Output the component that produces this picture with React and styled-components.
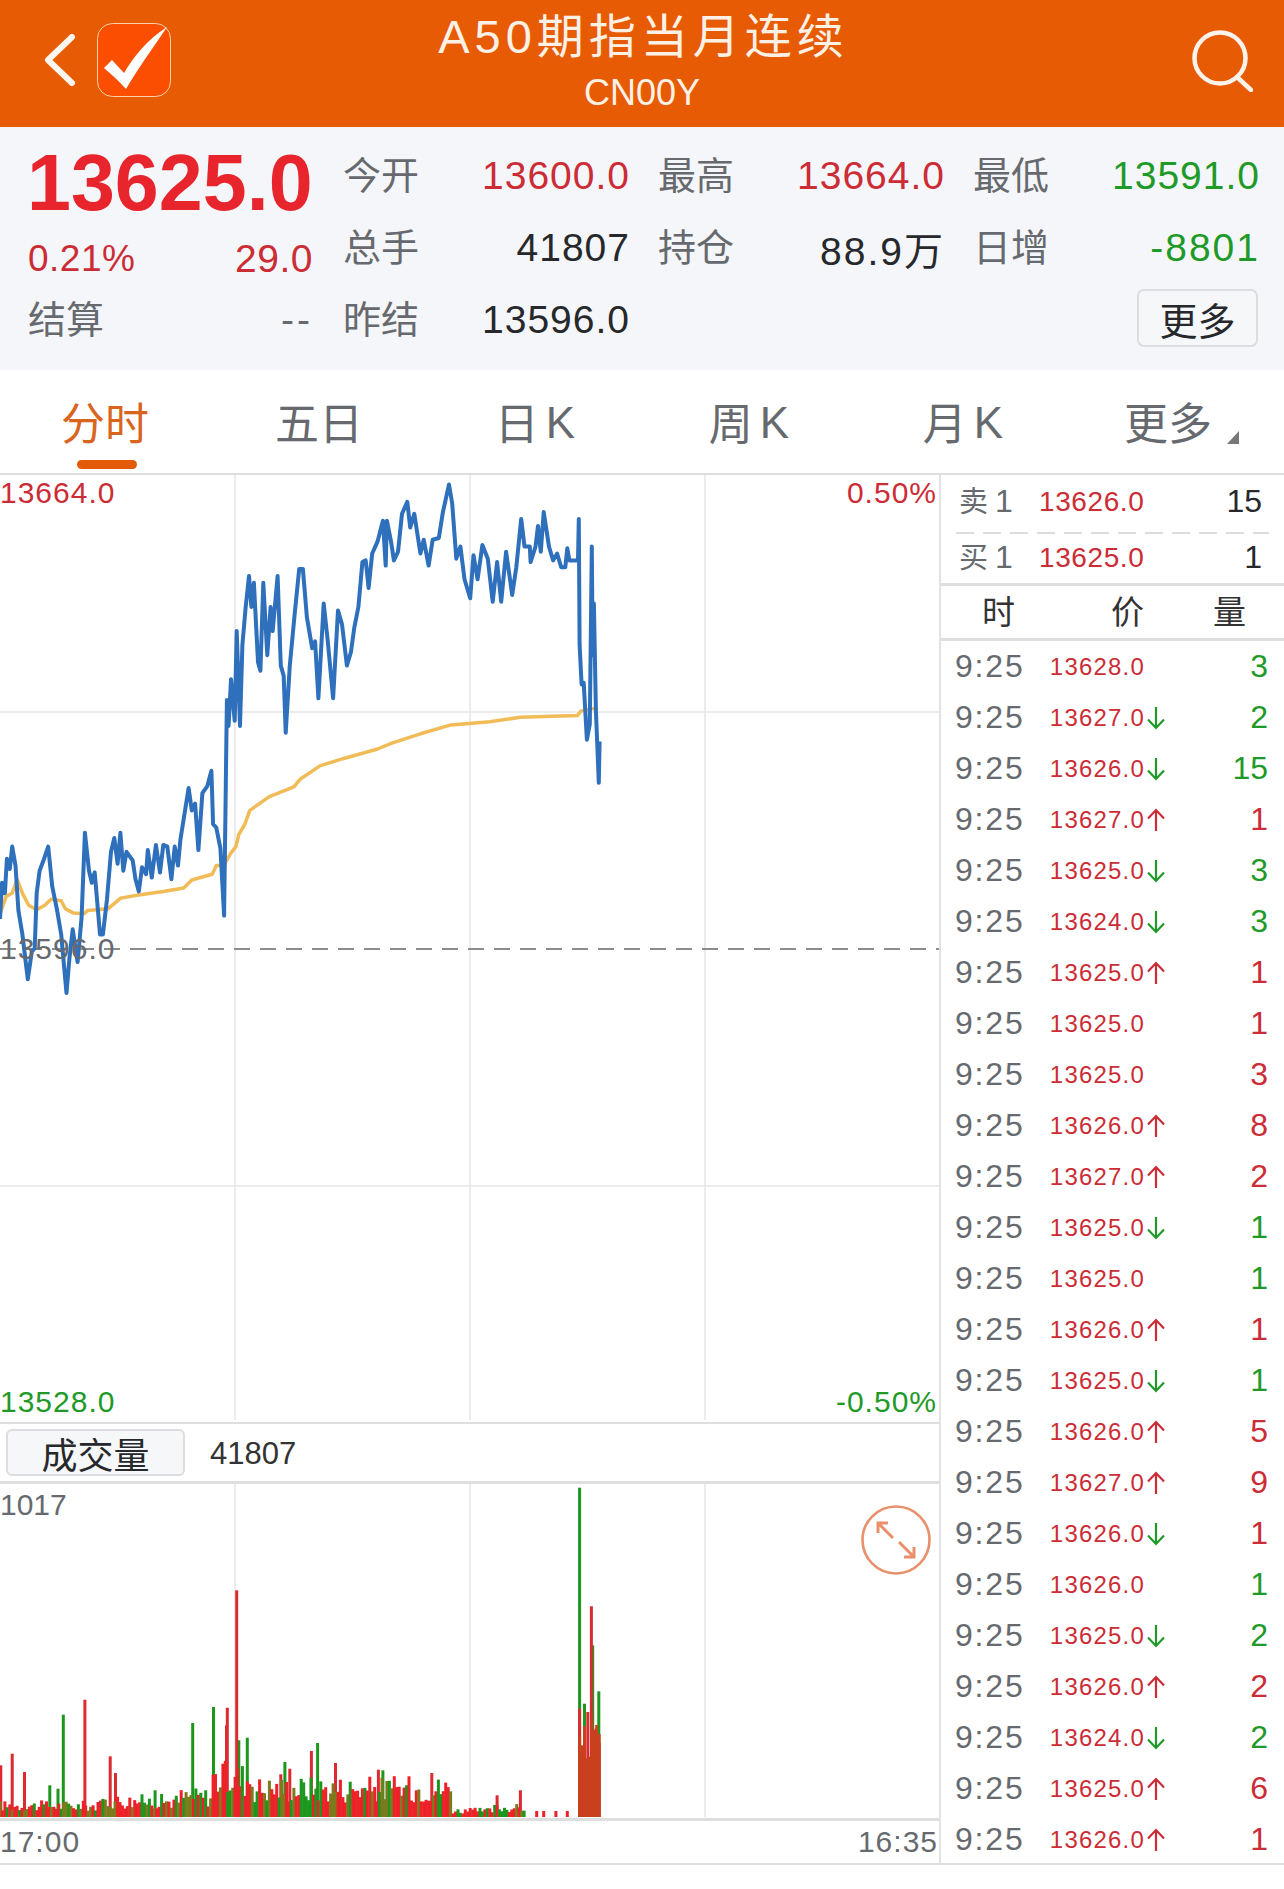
import React from "react";
import styled, { createGlobalStyle } from "styled-components";

const RED = "#cc2c35";
const GREEN = "#1f9a28";
const GREY = "#666a6e";
const INK = "#26282b";

const GlobalStyle = createGlobalStyle`
  html, body { margin: 0; padding: 0; background: #fff; }
  body { font-family: "Liberation Sans", "Noto Sans CJK SC", sans-serif; }
`;

const Page = styled.div`
  width: 1284px;
  height: 1889px;
  display: flex;
  flex-direction: column;
  background: #fff;
  overflow: hidden;
`;

const Header = styled.header`
  height: 127px;
  flex: none;
  background: #e85b05;
  display: grid;
  grid-template-columns: 1fr auto 1fr;
  align-items: center;
  color: #fdf1e6;
`;

const HeaderSide = styled.div`
  display: flex;
  align-items: center;
  gap: 21px;
  justify-content: ${(p) => (p.$right ? "flex-end" : "flex-start")};
  padding: ${(p) => (p.$right ? "0 31px 6px 0" : "0 0 7px 44px")};
`;

const HeaderTitle = styled.div`
  display: flex;
  flex-direction: column;
  align-items: center;
  white-space: nowrap;
`;

const TitleText = styled.div`
  font-size: 47px;
  line-height: 58px;
  letter-spacing: 5px;
  margin: -7px 0 0 3px;
`;

const SubTitle = styled.div`
  font-size: 36px;
  line-height: 40px;
  margin-top: 7px;
`;

const Info = styled.section`
  height: 243px;
  flex: none;
  box-sizing: border-box;
  padding: 13px 26px 0 28px;
  background: #f5f6f9;
  display: grid;
  grid-template-columns: repeat(4, 285px);
  grid-auto-rows: 72px;
  column-gap: 30px;
`;

const Cell = styled.div`
  display: flex;
  align-items: center;
  justify-content: space-between;
  box-sizing: border-box;
  padding-top: ${(p) => p.$pad || 0}px;
  white-space: nowrap;
`;

const BigPrice = styled.div`
  font-size: 79px;
  font-weight: 700;
  color: #e8252d;
  line-height: 1;
  margin-left: -1px;
`;

const Label = styled.span`
  font-size: 38px;
  line-height: 44px;
  margin-top: -1px;
  color: ${GREY};
`;

const Value = styled.span`
  font-size: 39px;
  letter-spacing: ${(p) => p.$spacing || 1}px;
  margin-right: -2px;
  color: ${(p) => p.$color || INK};
`;

const SmallValue = styled.span`
  font-size: ${(p) => p.$size || 37}px;
  letter-spacing: 0.5px;
  color: ${RED};
`;

const Dashes = styled.span`
  font-size: 39px;
  letter-spacing: 3px;
  color: ${GREY};
`;

const MoreButton = styled.button`
  width: 121px;
  height: 58px;
  margin: -5px 0 0 auto;
  padding: 0 0 3px;
  font: inherit;
  font-size: 38px;
  color: ${INK};
  background: #f6f7f9;
  border: 2px solid #dcdde0;
  border-radius: 7px;
`;

const Tabs = styled.nav`
  height: 105px;
  flex: none;
  box-sizing: border-box;
  border-bottom: 2px solid #dedede;
  display: grid;
  grid-template-columns: repeat(6, 1fr);
`;

const Tab = styled.div`
  position: relative;
  display: flex;
  align-items: center;
  justify-content: center;
  font-size: 44px;
  padding: 0 ${(p) => p.$shift || 0}px 2px 0;
  color: ${(p) => (p.$active ? "#d9641e" : GREY)};

  ${(p) =>
    p.$active &&
    `&::after {
      content: "";
      position: absolute;
      left: 77px;
      bottom: 4px;
      width: 60px;
      height: 9px;
      border-radius: 5px;
      background: #e35a08;
    }`}
`;

const TabK = styled.span`
  margin: 4px 0 0 7px;
`;

const Corner = styled.svg`
  position: absolute;
  right: 45px;
  top: 61px;
`;

const Main = styled.main`
  height: 1390px;
  flex: none;
  display: flex;
  border-bottom: 2px solid #dedede;
  box-sizing: border-box;
`;

const ChartColumn = styled.div`
  width: 939px;
  flex: none;
  display: flex;
  flex-direction: column;
`;

const Plot = styled.div`
  position: relative;
  flex: none;
  height: ${(p) => p.$h}px;
  box-sizing: border-box;
  border-bottom: ${(p) => p.$border || 0}px solid #dedede;
`;

const ChartSvg = styled.svg`
  display: block;
`;

const ChartLabel = styled.span`
  position: absolute;
  top: ${(p) => p.$top}px;
  ${(p) => (p.$right ? "right: 2px;" : "left: 0;")}
  font-size: 30px;
  line-height: 34px;
  letter-spacing: ${(p) => (p.$tight ? 0 : 1)}px;
  color: ${(p) => p.$color || GREY};
`;

const VolumeBar = styled.div`
  height: 60px;
  flex: none;
  box-sizing: border-box;
  border-bottom: 3px solid #dedede;
  display: flex;
  align-items: center;
  gap: 25px;
  padding-left: 6px;
`;

const VolumeTag = styled.div`
  width: 179px;
  height: 47px;
  box-sizing: border-box;
  display: flex;
  align-items: center;
  justify-content: center;
  font-size: 36px;
  color: ${INK};
  background: #f6f7f9;
  border: 2px solid #dcdde0;
  border-radius: 6px;
`;

const VolumeValue = styled.span`
  font-size: 31px;
  margin-top: 3px;
  color: #333;
`;

const ExpandIcon = styled.svg`
  position: absolute;
  right: 8px;
  top: 21px;
`;

const TimeAxis = styled.div`
  flex: 1;
  display: flex;
  align-items: center;
  justify-content: space-between;
  padding: 0 1px 0 0;
  font-size: 30px;
  letter-spacing: 1px;
  color: ${GREY};
`;

const Depth = styled.aside`
  flex: 1;
  border-left: 2px solid #e2e2e2;
  display: flex;
  flex-direction: column;
`;

const Quote = styled.div`
  height: ${(p) => p.$h}px;
  flex: none;
  box-sizing: border-box;
  margin: 0 15px;
  padding-bottom: ${(p) => p.$pad || 0}px;
  display: flex;
  align-items: center;
  background: ${(p) =>
    p.$dash
      ? "repeating-linear-gradient(90deg, #dcdcdc 0 18px, transparent 18px 27px) left bottom / 100% 2px no-repeat"
      : "none"};
`;

const QuoteLabel = styled.span`
  width: 83px;
  padding-left: 3px;
  margin-top: -5px;
  box-sizing: border-box;
  font-size: 29px;
  color: ${GREY};
  span {
    font-size: 32px;
    margin-left: 7px;
  }
`;

const QuotePrice = styled.span`
  font-size: 28px;
  letter-spacing: 0.6px;
  color: ${RED};
`;

const QuoteQty = styled.span`
  margin-left: auto;
  padding-right: 7px;
  font-size: 32px;
  color: ${INK};
`;

const TradeHead = styled.div`
  height: 58px;
  flex: none;
  box-sizing: border-box;
  border-top: 3px solid #dedede;
  border-bottom: 3px solid #dedede;
  display: grid;
  grid-template-columns: 115px 143px 1fr;
  font-size: 33px;
  line-height: 54px;
  color: #333;
  span {
    text-align: center;
  }
  span:last-child {
    text-align: left;
    padding-left: 14px;
  }
`;

const TradeRow = styled.div`
  height: 51px;
  flex: none;
  display: flex;
  align-items: center;
  padding: 0 16px 0 14px;
`;

const TradeTime = styled.span`
  width: 88px;
  flex: none;
  font-size: 32px;
  letter-spacing: 1.8px;
  color: ${GREY};
`;

const TradePrice = styled.span`
  width: 102px;
  flex: none;
  text-align: right;
  font-size: 24px;
  letter-spacing: 1.2px;
  color: ${RED};
`;

const TradeArrowSlot = styled.span`
  width: 20px;
  height: 24px;
  flex: none;
  margin-left: 1px;
`;

const TradeQty = styled.span`
  flex: 1;
  text-align: right;
  font-size: 32px;
  color: ${(p) => (p.$up ? RED : GREEN)};
`;

const blueTrace = [
  [0,1305],[5,1200],[12,1230],[17,1130],[24,1160],[30,1095],[38,1150],[45,1280],[55,1350],[68,1480],[78,1400],[85,1390],[90,1230],[97,1165],[108,1130],[118,1095],[128,1210],[140,1280],[150,1350],[163,1520],[170,1420],[178,1335],[190,1430],[200,1300],[208,1055],[218,1165],[225,1200],[232,1170],[245,1350],[252,1350],[262,1250],[272,1110],[280,1070],[288,1145],[295,1055],[302,1165],[310,1110],[325,1135],[332,1190],[340,1225],[348,1155],[358,1175],[362,1105],[372,1185],[382,1090],[392,1170],[400,1090],[410,1095],[420,1190],[428,1095],[436,1150],[442,1075],[450,1015],[462,925],[470,990],[478,970],[486,1105],[496,940],[508,920],[518,875],[522,1030],[530,1040],[540,1100],[549,1295],[556,670],[560,745],[566,610],[575,730],[580,470],[588,745],[594,510],[602,400],[610,310],[616,400],[622,330],[632,560],[638,585],[645,330],[655,540],[663,400],[668,470],[680,310],[688,570],[695,600],[700,765],[710,570],[722,420],[733,290],[742,290],[752,430],[765,520],[772,500],[780,665],[793,390],[803,500],[816,665],[828,410],[838,450],[850,570],[860,530],[868,460],[878,400],[888,270],[896,265],[903,345],[912,245],[925,210],[938,150],[945,280],[948,150],[958,210],[965,265],[975,240],[985,130],[998,95],[1005,170],[1015,130],[1030,245],[1038,205],[1050,280],[1060,205],[1075,200],[1085,125],[1100,45],[1108,100],[1118,260],[1128,225],[1138,320],[1152,375],[1160,250],[1170,320],[1182,220],[1195,260],[1207,385],[1218,270],[1228,385],[1240,240],[1255,365],[1265,285],[1277,145],[1285,225],[1298,225],[1300,270],[1312,225],[1318,165],[1325,240],[1332,125],[1345,225],[1355,265],[1365,245],[1375,285],[1385,285],[1390,230],[1395,265],[1416,265],[1418,145],[1420,510],[1425,625],[1430,620],[1438,785],[1445,740],[1450,225],[1452,540],[1455,390],[1460,700],[1467,910],[1469,790],
];

const avgTrace = [
  [0,1290],[15,1240],[30,1230],[42,1190],[55,1230],[70,1265],[90,1278],[110,1265],[125,1248],[150,1252],[160,1275],[180,1288],[205,1290],[215,1280],[265,1275],[295,1245],[340,1235],[400,1225],[450,1215],[470,1192],[520,1175],[530,1150],[548,1150],[565,1115],[578,1095],[585,1060],[600,1030],[612,990],[660,950],[720,922],[735,900],[785,860],[840,840],[925,812],[960,795],[1030,768],[1105,742],[1200,733],[1275,720],[1415,715],[1423,702],[1465,692],
];

// traced from the crop: x / 2.45, y / 2.9, plot starts at y=476
const toPoints = (trace) =>
  trace.map(([x, y]) => `${(x / 2.45).toFixed(1)},${(y / 2.9 - 6).toFixed(1)}`).join(" ");

const redSpikes = [[2,1095],[30,1060],[60,1115],[208,898],[270,1068],[283,1118],[555,975],[557,922],[580,570],[688,1122],[710,1105],[763,1052],[822,1088],[927,1108],[1058,1118],[1218,1185],[1275,1170],[1420,925],[1440,935],[1449,618],[1460,985],[1468,1028]];
const greenSpikes = [[122,1155],[142,1165],[155,943],[380,1170],[472,968],[523,920],[585,1020],[606,1012],[698,1085],[778,1028],[938,1110],[1420,262],[1432,910],[1452,735],[1467,873]];

const envelope = (x) => {
  if (x < 250) return 50;
  if (x < 440) return 70;
  if (x < 520) return 90;
  if (x < 620) return 170;
  if (x < 1105) return 125;
  if (x < 1210) return 28;
  if (x < 1285) return 40;
  return 0;
};

const BAR_RED = "#ec2228";
const BAR_GREEN = "#1c961c";
const BAR_OLIVE = "#7d7a1e";

const buildBars = () => {
  let seed = 17;
  const rand = () => {
    seed = (seed * 9301 + 49297) % 233280;
    return seed / 233280;
  };
  const pick = () => {
    const r = rand();
    if (r < 0.5) return BAR_RED;
    return r < 0.75 ? BAR_GREEN : BAR_OLIVE;
  };
  const spikes = [];
  greenSpikes.forEach(([x, top]) => spikes.push({ x, h: 1250 - top, c: BAR_GREEN }));
  redSpikes.forEach(([x, top]) => spikes.push({ x, h: 1250 - top, c: "#dd2a30" }));
  const base = [];
  for (let x = 0; x < 1395; x += 6) {
    const env = envelope(x);
    if (!env) continue;
    base.push({ x, h: env * (0.35 + rand() * 0.65), c: pick() });
  }
  [1315, 1332, 1362, 1390].forEach((x) => base.push({ x, h: 18, c: BAR_RED }));
  for (let x = 1420; x < 1472; x += 6) {
    base.push({ x, h: 170 + rand() * 130, c: x % 12 ? "#c9401e" : BAR_OLIVE });
  }
  // tall ones go behind so the dense band stays mixed
  return [...spikes, ...base];
};

const volumeBars = buildBars();

const trades = [
  ["13628.0", null, "3", false],
  ["13627.0", "down", "2", false],
  ["13626.0", "down", "15", false],
  ["13627.0", "up", "1", true],
  ["13625.0", "down", "3", false],
  ["13624.0", "down", "3", false],
  ["13625.0", "up", "1", true],
  ["13625.0", null, "1", true],
  ["13625.0", null, "3", true],
  ["13626.0", "up", "8", true],
  ["13627.0", "up", "2", true],
  ["13625.0", "down", "1", false],
  ["13625.0", null, "1", false],
  ["13626.0", "up", "1", true],
  ["13625.0", "down", "1", false],
  ["13626.0", "up", "5", true],
  ["13627.0", "up", "9", true],
  ["13626.0", "down", "1", true],
  ["13626.0", null, "1", false],
  ["13625.0", "down", "2", false],
  ["13626.0", "up", "2", true],
  ["13624.0", "down", "2", false],
  ["13625.0", "up", "6", true],
  ["13626.0", "up", "1", true],
];

const TradeArrow = ({ dir }) => (
  <svg width="20" height="24" viewBox="0 0 20 24" fill="none" strokeWidth="2.2">
    {dir === "up" ? (
      <path d="M10 23V2M2 10.5L10 2l8 8.5" stroke={RED} />
    ) : (
      <path d="M10 1v21M2 13.5l8 8.5 8-8.5" stroke={GREEN} />
    )}
  </svg>
);

const GridLines = ({ height }) => (
  <g stroke="#e6e6e6" strokeWidth="1.5">
    <line x1="235" y1="0" x2="235" y2={height} />
    <line x1="470" y1="0" x2="470" y2={height} />
    <line x1="705" y1="0" x2="705" y2={height} />
  </g>
);

export default function App() {
  return (
    <Page>
      <GlobalStyle />
      <Header>
        <HeaderSide>
          <svg width="32" height="52" viewBox="0 0 32 52" fill="none">
            <path d="M28 3L4 26l24 23" stroke="#fdf6ee" strokeWidth="6" strokeLinecap="round" strokeLinejoin="round" />
          </svg>
          <svg width="74" height="74" viewBox="0 0 74 74">
            <rect x="0.5" y="0.5" width="73" height="73" rx="15" fill="#fb4e00" stroke="#fbd2a8" strokeWidth="1" />
            <path d="M7 45l8-8 12 13C37 33 50 17 70 4 58 22 42 44 29 66 22 58 14 51 7 45z" fill="#fff" />
          </svg>
        </HeaderSide>
        <HeaderTitle>
          <TitleText>A50期指当月连续</TitleText>
          <SubTitle>CN00Y</SubTitle>
        </HeaderTitle>
        <HeaderSide $right>
          <svg width="62" height="62" viewBox="0 0 62 62" fill="none" stroke="#fdf3ea" strokeWidth="4.5" strokeLinecap="round">
            <circle cx="29" cy="28" r="25.5" />
            <path d="M46 47l14 13" />
          </svg>
        </HeaderSide>
      </Header>

      <Info>
        <Cell $pad={12}>
          <BigPrice>13625.0</BigPrice>
        </Cell>
        <Cell>
          <Label>今开</Label>
          <Value $color={RED}>13600.0</Value>
        </Cell>
        <Cell>
          <Label>最高</Label>
          <Value $color={RED}>13664.0</Value>
        </Cell>
        <Cell>
          <Label>最低</Label>
          <Value $color={GREEN}>13591.0</Value>
        </Cell>

        <Cell $pad={22}>
          <SmallValue>0.21%</SmallValue>
          <SmallValue $size={39}>29.0</SmallValue>
        </Cell>
        <Cell>
          <Label>总手</Label>
          <Value>41807</Value>
        </Cell>
        <Cell>
          <Label>持仓</Label>
          <Value $spacing={2}>88.9万</Value>
        </Cell>
        <Cell>
          <Label>日增</Label>
          <Value $spacing={2} $color={GREEN}>-8801</Value>
        </Cell>

        <Cell>
          <Label>结算</Label>
          <Dashes>--</Dashes>
        </Cell>
        <Cell>
          <Label>昨结</Label>
          <Value>13596.0</Value>
        </Cell>
        <Cell />
        <Cell>
          <MoreButton>更多</MoreButton>
        </Cell>
      </Info>

      <Tabs>
        <Tab $active $shift={4}>分时</Tab>
        <Tab $shift={4}>五日</Tab>
        <Tab>日<TabK>K</TabK></Tab>
        <Tab>周<TabK>K</TabK></Tab>
        <Tab>月<TabK>K</TabK></Tab>
        <Tab $shift={18}>
          更多
          <Corner width="12" height="13" viewBox="0 0 12 13">
            <path d="M12 0v13H0z" fill="#777" />
          </Corner>
        </Tab>
      </Tabs>

      <Main>
        <ChartColumn>
          <Plot $h={949} $border={2}>
            <ChartSvg width="939" height="947" viewBox="0 0 939 947" fill="none">
              <GridLines height={945} />
              <g stroke="#e6e6e6" strokeWidth="1.5">
                <line x1="0" y1="237" x2="939" y2="237" />
                <line x1="0" y1="711" x2="939" y2="711" />
              </g>
              <line x1="0" y1="474" x2="939" y2="474" stroke="#8c8c8c" strokeWidth="2" strokeDasharray="16 10" />
              <polyline points={toPoints(avgTrace)} stroke="#f1bc58" strokeWidth="3.5" strokeLinejoin="round" />
              <polyline points={toPoints(blueTrace)} stroke="#2e70bb" strokeWidth="4" strokeLinejoin="round" />
            </ChartSvg>
            <ChartLabel $top={1} $color={RED}>13664.0</ChartLabel>
            <ChartLabel $top={1} $right $color={RED}>0.50%</ChartLabel>
            <ChartLabel $top={457}>13596.0</ChartLabel>
            <ChartLabel $top={910} $color={GREEN}>13528.0</ChartLabel>
            <ChartLabel $top={910} $right $color={GREEN}>-0.50%</ChartLabel>
          </Plot>

          <VolumeBar>
            <VolumeTag>成交量</VolumeTag>
            <VolumeValue>41807</VolumeValue>
          </VolumeBar>

          <Plot $h={337} $border={3}>
            <ChartSvg width="939" height="334" viewBox="0 0 939 334" fill="none">
              <GridLines height={333} />
              {volumeBars.map((b, i) => (
                <rect
                  key={i}
                  x={(b.x / 2.45 - 1.5).toFixed(1)}
                  y={(333 - b.h / 3).toFixed(1)}
                  width="3"
                  height={(b.h / 3).toFixed(1)}
                  fill={b.c}
                />
              ))}
            </ChartSvg>
            <ChartLabel $top={4} $tight>1017</ChartLabel>
            <ExpandIcon width="70" height="70" viewBox="0 0 70 70" fill="none" stroke="#e8906a" strokeWidth="2.6">
              <circle cx="35" cy="35" r="33.5" />
              <path d="M17 18l15 15M17 28V18h10M53 52L38 37M53 42v10H43" strokeWidth="3" />
            </ExpandIcon>
          </Plot>

          <TimeAxis>
            <span>17:00</span>
            <span>16:35</span>
          </TimeAxis>
        </ChartColumn>

        <Depth>
          <Quote $h={59} $pad={6} $dash>
            <QuoteLabel>卖<span>1</span></QuoteLabel>
            <QuotePrice>13626.0</QuotePrice>
            <QuoteQty>15</QuoteQty>
          </Quote>
          <Quote $h={49} $pad={2}>
            <QuoteLabel>买<span>1</span></QuoteLabel>
            <QuotePrice>13625.0</QuotePrice>
            <QuoteQty>1</QuoteQty>
          </Quote>
          <TradeHead>
            <span>时</span>
            <span>价</span>
            <span>量</span>
          </TradeHead>
          {trades.map(([price, dir, qty, up], i) => (
            <TradeRow key={i}>
              <TradeTime>9:25</TradeTime>
              <TradePrice>{price}</TradePrice>
              <TradeArrowSlot>{dir && <TradeArrow dir={dir} />}</TradeArrowSlot>
              <TradeQty $up={up}>{qty}</TradeQty>
            </TradeRow>
          ))}
        </Depth>
      </Main>
    </Page>
  );
}
